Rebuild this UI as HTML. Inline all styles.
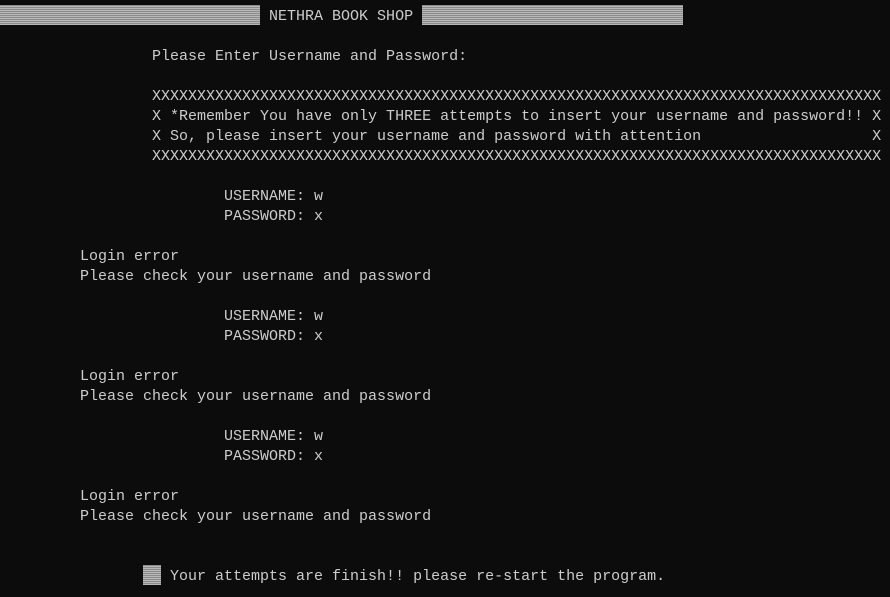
<!DOCTYPE html>
<html><head><style>
body{margin:0;background:#0c0c0c;width:890px;height:597px;overflow:hidden;position:relative;}
pre{position:absolute;left:8px;top:7px;margin:0;font-family:"Liberation Mono",monospace;font-size:15px;line-height:20px;color:#cccccc;}
.b{position:absolute;background:repeating-linear-gradient(0deg,#b8b8b8 0 1px,#8a8a9a 1px 2px);}
</style></head><body>
<div class="b" style="left:0;top:5px;width:260px;height:20px"></div>
<div class="b" style="left:422px;top:5px;width:261px;height:20px"></div>
<div class="b" style="left:143px;top:565px;width:18px;height:20px"></div>
<pre>                             NETHRA BOOK SHOP

                Please Enter Username and Password:

                XXXXXXXXXXXXXXXXXXXXXXXXXXXXXXXXXXXXXXXXXXXXXXXXXXXXXXXXXXXXXXXXXXXXXXXXXXXXXXXXX
                X *Remember You have only THREE attempts to insert your username and password!! X
                X So, please insert your username and password with attention                   X
                XXXXXXXXXXXXXXXXXXXXXXXXXXXXXXXXXXXXXXXXXXXXXXXXXXXXXXXXXXXXXXXXXXXXXXXXXXXXXXXXX

                        USERNAME: w
                        PASSWORD: x

        Login error
        Please check your username and password

                        USERNAME: w
                        PASSWORD: x

        Login error
        Please check your username and password

                        USERNAME: w
                        PASSWORD: x

        Login error
        Please check your username and password


                  Your attempts are finish!! please re-start the program.</pre>
</body></html>
